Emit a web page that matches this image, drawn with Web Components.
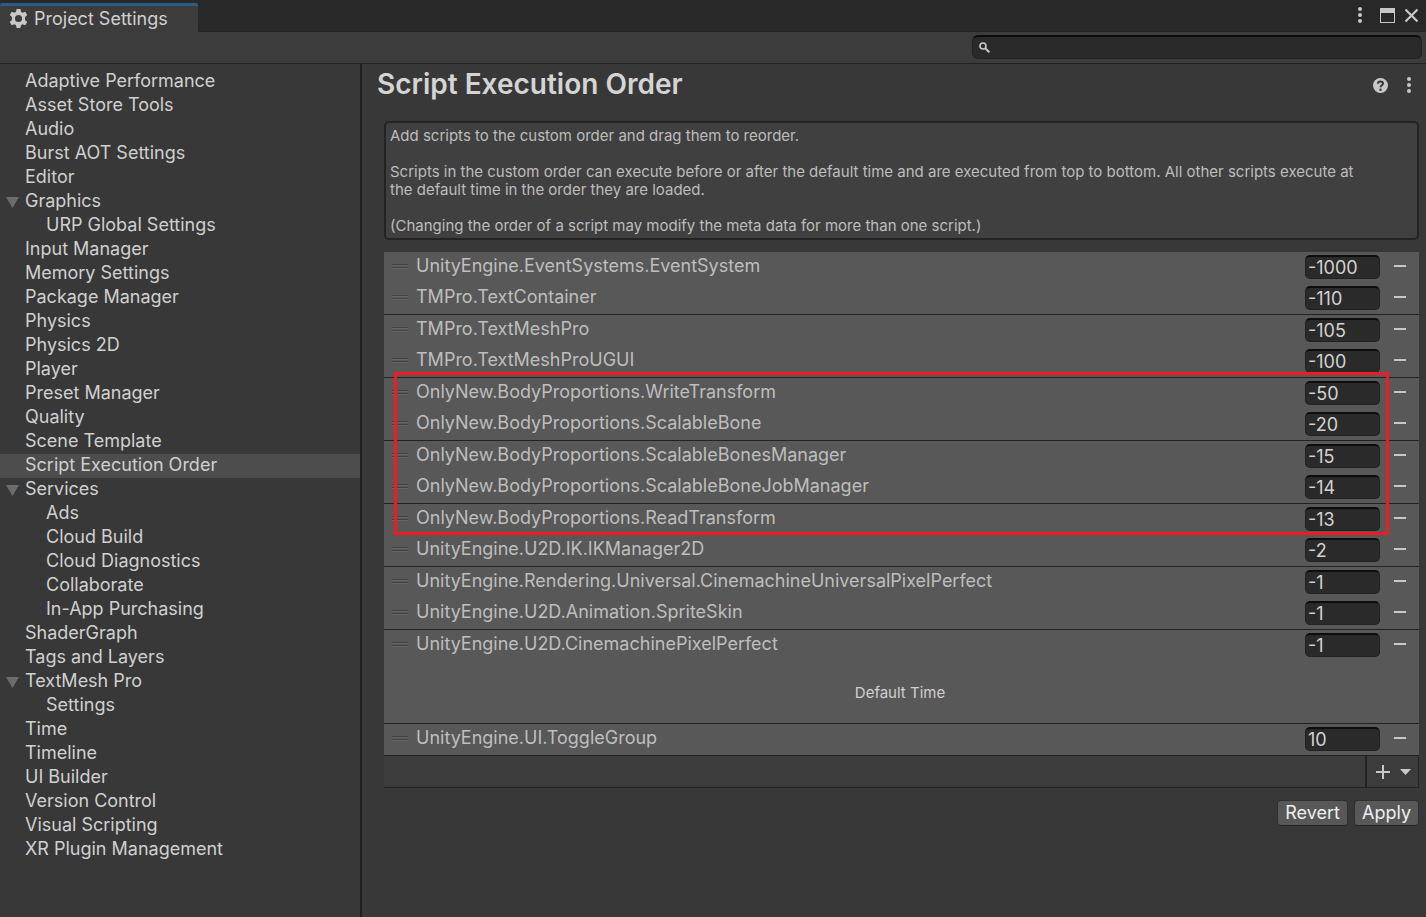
<!DOCTYPE html>
<html lang="en">
<head>
<meta charset="utf-8">
<title>Project Settings</title>
<style>
html, body { margin: 0; min-height: 100%; background: #383838; }
body {
  font-family: Inter, "Liberation Sans", sans-serif;
  font-size: 18px;
  line-height: 24px;
  font-optical-sizing: none;
  color: #d0d0d0;
  --line: #222222;
  --field: #2a2a2a;
}
</style>
</head>
<body>
<settings-window></settings-window>
<script>
const define = (name, html, setup) => {
  const template = document.createElement("template");
  template.innerHTML = html;
  customElements.define(name, class extends HTMLElement {
    connectedCallback() {
      if (this.shadowRoot) return;
      const root = this.attachShadow({ mode: "open" });
      root.append(template.content.cloneNode(true));
      if (setup) setup(this, root);
    }
  });
};

const kebab = '<svg width="6" height="18" viewBox="0 0 6 18" fill="#c8c8c8"><circle cx="3" cy="3" r="2"/><circle cx="3" cy="9" r="2"/><circle cx="3" cy="15" r="2"/></svg>';

define("window-tabs", `
<style>
:host { display: flex; justify-content: space-between; height: 31px; background: #282828; border-bottom: 1px solid var(--line); }
.tab { box-sizing: border-box; display: flex; align-items: center; gap: 6px; width: 198px; height: 29px; margin: 3px 0 -1px; padding-left: 9px;
  background: #3c3c3c; border-top: 3px solid #2c5d87; border-radius: 2px 2px 0 0; }
.tab svg { padding-bottom: 2px; }
.tools { display: flex; align-items: center; height: 30px; padding-right: 7px; }
button { display: flex; padding: 0; border: 0; background: none; }
.menu { margin-right: 17px; }
.max { margin-right: 9px; }
svg { display: block; }
</style>
<div class="tab">
  <svg width="19" height="19" viewBox="0 0 24 24" fill="#c8c8c8"><path fill-rule="evenodd" d="M9.600 0h4.800l.7 3.500 2.100 1.200 3.400-1.200 2.400 4.200-2.700 2.300v4l2.700 2.300-2.400 4.200-3.400-1.200-2.100 1.200-.7 3.500H9.600l-.7-3.500-2.100-1.200-3.400 1.200L1 16.300 3.700 14v-4L1 7.700l2.400-4.200 3.400 1.200 2.100-1.200zM12 7.500a4.500 4.500 0 1 0 0 9 4.500 4.500 0 0 0 0-9z"/></svg>
  <span>Project Settings</span>
</div>
<div class="tools">
  <button class="menu" aria-label="Window menu">${kebab}</button>
  <button class="max" aria-label="Maximize"><svg width="15" height="15" viewBox="0 0 15 15"><path fill="#c8c8c8" fill-rule="evenodd" d="M0 0h15v15H0zM1 5v9h13V5z"/></svg></button>
  <button aria-label="Close"><svg width="15" height="15" viewBox="0 0 15 15" stroke="#c8c8c8" stroke-width="2.200"><path d="M1.500 1.500l12 12M13.500 1.500l-12 12"/></svg></button>
</div>`);

define("search-bar", `
<style>
:host { display: flex; justify-content: flex-end; align-items: flex-start; box-sizing: border-box; height: 32px; padding: 3px 4px 0 0; background: #3c3c3c; border-bottom: 1px solid var(--line); }
label { box-sizing: border-box; display: flex; align-items: center; gap: 6px; width: 450px; height: 24px; padding: 0 6px;
  background: var(--field); border: 1px solid #212121; border-top: 2px solid #0d0d0d; border-radius: 6px; }
input { flex: 1; min-width: 0; padding: 0; border: 0; outline: 0; background: none; color: #d2d2d2; font: inherit; font-optical-sizing: inherit; }
</style>
<label><svg width="11" height="11" viewBox="0 0 11 11" fill="none" stroke="#c8c8c8" stroke-width="1.600"><circle cx="4" cy="4" r="3"/><path d="M6.200 6.200L10.300 10.300" stroke-width="2"/></svg>
<input type="text" aria-label="Search settings"></label>`);

define("nav-item", `
<style>
:host { display: block; }
a { box-sizing: border-box; display: flex; align-items: center; height: 24px; padding: 0 0 2px 6px; color: inherit; text-decoration: none; white-space: nowrap; }
i { width: 13px; margin-right: 6px; }
svg { display: block; visibility: hidden; }
:host([open]) svg { visibility: visible; }
:host([child]) a { padding-left: 27px; }
:host([selected]) a { background: #4d4d4d; }
</style>
<a href="#"><i><svg width="13" height="15" viewBox="0 0 13 15"><path d="M0 3h13L6.500 14z" fill="#6c6c6c"/></svg></i><slot></slot></a>`);

define("settings-nav", `
<style>
:host { display: block; flex: none; width: 360px; border-right: 2px solid #1f1f1f; }
nav { padding-top: 6px; }
</style>
<nav aria-label="Settings">
<nav-item>Adaptive Performance</nav-item>
<nav-item>Asset Store Tools</nav-item>
<nav-item>Audio</nav-item>
<nav-item>Burst AOT Settings</nav-item>
<nav-item>Editor</nav-item>
<nav-item open>Graphics</nav-item>
<nav-item child>URP Global Settings</nav-item>
<nav-item>Input Manager</nav-item>
<nav-item>Memory Settings</nav-item>
<nav-item>Package Manager</nav-item>
<nav-item>Physics</nav-item>
<nav-item>Physics 2D</nav-item>
<nav-item>Player</nav-item>
<nav-item>Preset Manager</nav-item>
<nav-item>Quality</nav-item>
<nav-item>Scene Template</nav-item>
<nav-item selected>Script Execution Order</nav-item>
<nav-item open>Services</nav-item>
<nav-item child>Ads</nav-item>
<nav-item child>Cloud Build</nav-item>
<nav-item child>Cloud Diagnostics</nav-item>
<nav-item child>Collaborate</nav-item>
<nav-item child>In-App Purchasing</nav-item>
<nav-item>ShaderGraph</nav-item>
<nav-item>Tags and Layers</nav-item>
<nav-item open>TextMesh Pro</nav-item>
<nav-item child>Settings</nav-item>
<nav-item>Time</nav-item>
<nav-item>Timeline</nav-item>
<nav-item>UI Builder</nav-item>
<nav-item>Version Control</nav-item>
<nav-item>Visual Scripting</nav-item>
<nav-item>XR Plugin Management</nav-item>
</nav>`);

define("help-box", `
<style>
:host { display: block; padding: 4px 40px 3px 4px; background: #404040; border: 2px solid #232323; border-radius: 5px; color: #bdbdbd; font-size: 15px; line-height: 18px; }
::slotted(p) { margin: 0 0 18px; }
::slotted(p:last-child) { margin: 0; }
</style>
<slot></slot>`);

define("script-row", `
<style>
:host { display: flex; align-items: flex-start; box-sizing: border-box; height: 31px; padding: 3px 12px 0 8px; color: #bebebe; }
:host([divided]) { height: 32px; border-bottom: 1px solid var(--line); }
svg { display: block; }
.grip { margin: 8px 8px 0 0; }
label { flex: 1; line-height: 22px; }
input { box-sizing: border-box; width: 75px; height: 24px; padding: 0 2px 1px; border: 1px solid #212121; border-top: 2px solid #0d0d0d; border-radius: 5px;
  outline: 0; background: var(--field); color: #d2d2d2; font: inherit; font-optical-sizing: inherit; line-height: 20px; }
button { margin: 10px 1px 0 14px; padding: 0; border: 0; background: none; }
</style>
<svg class="grip" width="16" height="6" viewBox="0 0 16 6"><path fill="#414141" d="M0 1h16v1H0zM0 4h16v1H0z"/><path fill="#666" d="M0 2h16v1H0zM0 5h16v1H0z"/></svg>
<label for="order"></label>
<input id="order" type="text">
<button aria-label="Remove"><svg width="12" height="2"><path fill="#c8c8c8" d="M0 0h12v2H0z"/></svg></button>`,
(host, root) => {
  root.querySelector("label").textContent = host.getAttribute("name");
  root.querySelector("input").value = host.getAttribute("order");
});

define("script-list", `
<style>
:host { display: block; position: relative; background: #585858; }
.default { box-sizing: border-box; height: 63px; padding: 1px 3px 0 0; border-bottom: 1px solid var(--line); font-size: 15px; line-height: 62px; text-align: center; color: #d0d0d0; }
.mark { position: absolute; box-sizing: border-box; left: 10px; right: 30px; top: 120px; height: 163px; border: 3px solid #ed1c24; pointer-events: none; }
footer { display: flex; justify-content: flex-end; box-sizing: border-box; height: 32px; background: #3c3c3c; border: 1px solid var(--line); border-width: 0 1px 1px 0; }
footer button { display: flex; align-items: center; gap: 10px; height: 31px; padding: 0 7px 0 9px; border: 0; border-left: 2px solid var(--line); background: none; }
</style>
<script-row name="UnityEngine.EventSystems.EventSystem" order="-1000"></script-row>
<script-row name="TMPro.TextContainer" order="-110" divided></script-row>
<script-row name="TMPro.TextMeshPro" order="-105"></script-row>
<script-row name="TMPro.TextMeshProUGUI" order="-100" divided></script-row>
<script-row name="OnlyNew.BodyProportions.WriteTransform" order="-50"></script-row>
<script-row name="OnlyNew.BodyProportions.ScalableBone" order="-20" divided></script-row>
<script-row name="OnlyNew.BodyProportions.ScalableBonesManager" order="-15"></script-row>
<script-row name="OnlyNew.BodyProportions.ScalableBoneJobManager" order="-14" divided></script-row>
<script-row name="OnlyNew.BodyProportions.ReadTransform" order="-13"></script-row>
<script-row name="UnityEngine.U2D.IK.IKManager2D" order="-2" divided></script-row>
<script-row name="UnityEngine.Rendering.Universal.CinemachineUniversalPixelPerfect" order="-1"></script-row>
<script-row name="UnityEngine.U2D.Animation.SpriteSkin" order="-1" divided></script-row>
<script-row name="UnityEngine.U2D.CinemachinePixelPerfect" order="-1"></script-row>
<div class="default">Default Time</div>
<script-row name="UnityEngine.UI.ToggleGroup" order="10" divided></script-row>
<footer><button aria-label="Add script"><svg width="14" height="14" viewBox="0 0 14 14"><path fill="#c8c8c8" d="M6 0h2v6h6v2H8v6H6V8H0V6h6z"/></svg><svg width="11" height="6" viewBox="0 0 11 6"><path fill="#c8c8c8" d="M0 0h11L5.500 6z"/></svg></button></footer>
<div class="mark"></div>`);

define("push-button", `
<style>
:host { display: block; }
button { box-sizing: border-box; height: 26px; padding: 0 7px; border: 1px solid #303030; border-bottom-color: #242424; border-radius: 4px; background: #585858; color: #eeeeee; font: inherit; font-optical-sizing: inherit; line-height: 24px; }
</style>
<button><slot></slot></button>`);

define("settings-panel", `
<style>
:host { display: block; flex: 1; min-width: 0; padding: 0 7px 0 15px; }
header { display: flex; align-items: center; height: 42px; }
h1 { flex: 1; margin: 0; color: #d4d4d4; font-size: 28px; line-height: 40px; padding-bottom: 2px; font-weight: 600; }
header button { display: flex; padding: 0; border: 0; background: none; }
header button + button { margin: 0 7px 0 18px; }
main { padding: 15px 0 0 7px; }
script-list { margin: 12px 0; }
.actions { display: flex; justify-content: flex-end; gap: 6px; }
</style>
<header><h1>Script Execution Order</h1>
<button aria-label="Help"><svg width="15" height="15" viewBox="0 0 15 15"><circle cx="7.500" cy="7.500" r="7.500" fill="#c8c8c8"/><path d="M5 5.700C5 2.700 10 2.700 10 5.500c0 1.700-2.500 1.700-2.500 3.800" fill="none" stroke="#383838" stroke-width="2"/><circle cx="7.500" cy="11.700" r="1.200" fill="#383838"/></svg></button>
<button aria-label="Panel menu">${kebab}</button></header>
<main>
<help-box><p>Add scripts to the custom order and drag them to reorder.</p><p>Scripts in the custom order can execute before or after the default time and are executed from top to bottom. All other scripts execute at the default time in the order they are loaded.</p><p>(Changing the order of a script may modify the meta data for more than one script.)</p></help-box>
<script-list></script-list>
<div class="actions"><push-button>Revert</push-button><push-button>Apply</push-button></div>
</main>`);

define("settings-window", `
<style>
:host { display: flex; flex-direction: column; min-height: 100vh; }
.body { display: flex; flex: 1; }
</style>
<window-tabs></window-tabs>
<search-bar></search-bar>
<div class="body"><settings-nav></settings-nav><settings-panel></settings-panel></div>`);
</script>
</body>
</html>
